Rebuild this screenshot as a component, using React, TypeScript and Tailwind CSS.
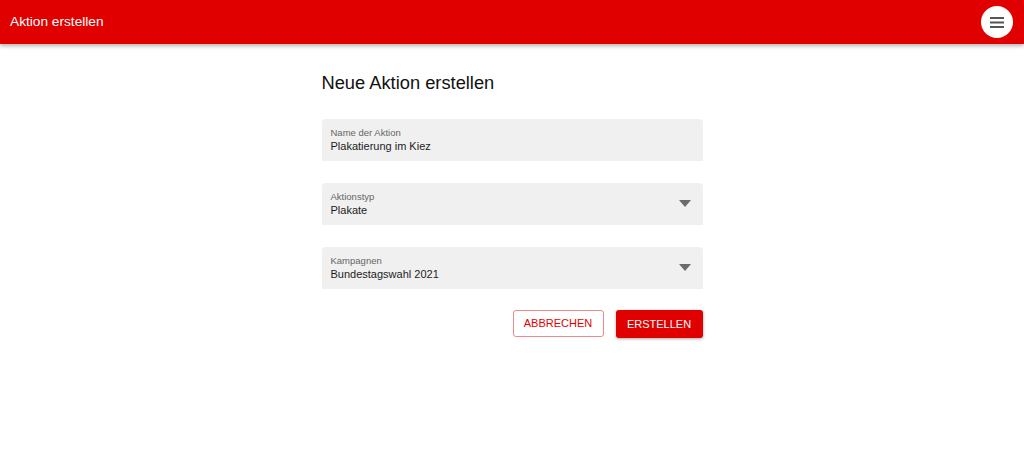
function Field({ label, value, select }: { label: string; value: string; select?: boolean }) {
  return (
    <div className="flex h-[42px] items-center rounded-t-[4px] bg-[#f0f0f0] pl-[9px] pr-[12px]">
      <div className="flex flex-1 flex-col">
        <span className="text-[9.5px] leading-[11px] text-[#666]">{label}</span>
        <span className="mt-[2px] text-[11px] leading-[13px] text-[#1c1c1c]">{value}</span>
      </div>
      {select && (
        <svg width="12" height="7" viewBox="0 0 12 7" className="mb-[1px]">
          <path d="M0 0 L12 0 L6 7 Z" fill="#6b6b6b" />
        </svg>
      )}
    </div>
  );
}

export default function App() {
  return (
    <div className="min-h-[473px] bg-white font-['Liberation_Sans',Arial,sans-serif]">
      <header className="flex h-[44px] items-center justify-between bg-[#e00000] pl-[10px] pr-[11px] shadow-[0_2px_4px_rgba(0,0,0,0.3)]">
        <span className="text-[13.7px] text-white">Aktion erstellen</span>
        <button className="flex h-[32px] w-[32px] items-center justify-center rounded-full bg-white">
          <svg width="14" height="11" viewBox="0 0 14 11">
            <rect x="0" y="0" width="14" height="2" fill="#555" />
            <rect x="0" y="4.5" width="14" height="2" fill="#555" />
            <rect x="0" y="9" width="14" height="2" fill="#555" />
          </svg>
        </button>
      </header>
      <main className="mx-auto flex w-[381px] flex-col pt-[28px]">
        <h1 className="text-[18.3px] leading-[22px] text-[#111]">Neue Aktion erstellen</h1>
        <div className="mt-[25px] flex flex-col gap-[22px]">
          <Field label="Name der Aktion" value="Plakatierung im Kiez" />
          <Field label="Aktionstyp" value="Plakate" select />
          <Field label="Kampagnen" value="Bundestagswahl 2021" select />
        </div>
        <div className="mt-[21px] flex justify-end gap-[12px]">
          <button className="h-[27px] w-[91px] rounded-[3px] border border-[#f08a8a] text-[11px] text-[#e00000]">
            ABBRECHEN
          </button>
          <button className="h-[28px] w-[87px] rounded-[3px] bg-[#e00000] text-[11px] text-white shadow-[0_1px_3px_rgba(0,0,0,0.35)]">
            ERSTELLEN
          </button>
        </div>
      </main>
    </div>
  );
}
